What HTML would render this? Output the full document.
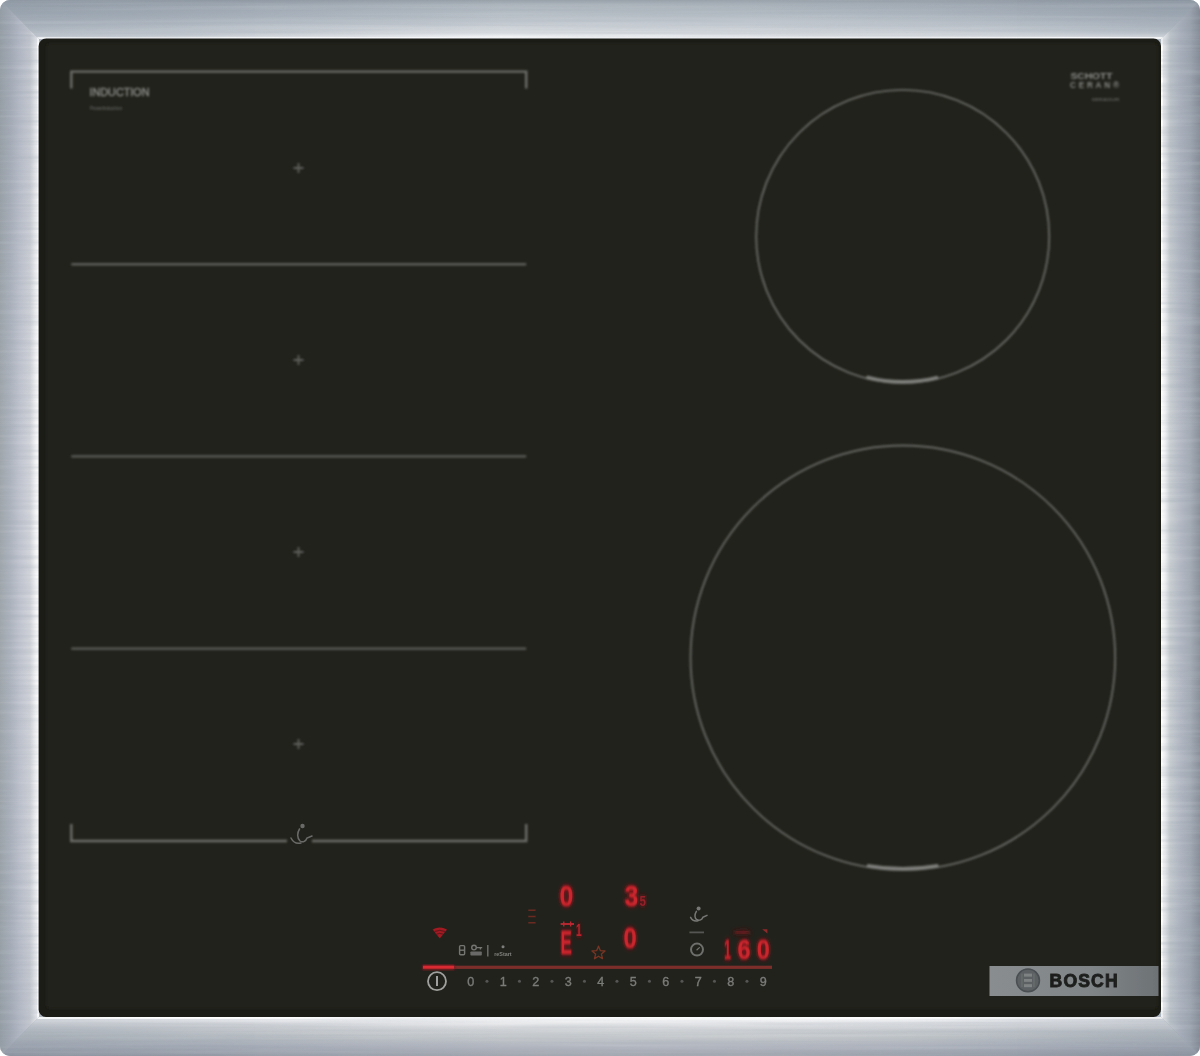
<!DOCTYPE html>
<html lang="en">
<head>
<meta charset="utf-8">
<title>Bosch induction hob</title>
<style>
html,body{margin:0;padding:0;background:#fff;}
body{width:1200px;height:1056px;overflow:hidden;position:relative;font-family:"Liberation Sans",sans-serif;}
svg{position:absolute;left:0;top:0;display:block;}
text{font-family:"Liberation Sans",sans-serif;}
</style>
</head>
<body>
<svg width="1200" height="1056" viewBox="0 0 1200 1056">
<defs>
  <linearGradient id="gTop" x1="0" y1="0" x2="0" y2="1">
    <stop offset="0" stop-color="#98a0a8"/><stop offset="0.1" stop-color="#a9b1b9"/><stop offset="0.35" stop-color="#b3bbc3"/><stop offset="0.65" stop-color="#c7cdd3"/><stop offset="0.85" stop-color="#d8dce0"/><stop offset="0.94" stop-color="#f1f2f4"/><stop offset="1" stop-color="#ffffff"/>
  </linearGradient>
  <linearGradient id="gBot" x1="0" y1="1" x2="0" y2="0">
    <stop offset="0" stop-color="#a0a5ad"/><stop offset="0.23" stop-color="#b2b6c0"/><stop offset="0.49" stop-color="#c5c9cc"/><stop offset="0.74" stop-color="#d8dadd"/><stop offset="0.9" stop-color="#f6f6f7"/><stop offset="1" stop-color="#ffffff"/>
  </linearGradient>
  <linearGradient id="gLeft" x1="0" y1="0" x2="1" y2="0">
    <stop offset="0" stop-color="#9ea5aa"/><stop offset="0.25" stop-color="#acb2bc"/><stop offset="0.5" stop-color="#c0c4cf"/><stop offset="0.77" stop-color="#d2d4da"/><stop offset="0.92" stop-color="#f4f4f6"/><stop offset="1" stop-color="#ffffff"/>
  </linearGradient>
  <linearGradient id="gRight" x1="1" y1="0" x2="0" y2="0">
    <stop offset="0" stop-color="#8a909a"/><stop offset="0.25" stop-color="#a4abb5"/><stop offset="0.5" stop-color="#b4b9c4"/><stop offset="0.77" stop-color="#c9cfd2"/><stop offset="0.9" stop-color="#f0f1f3"/><stop offset="1" stop-color="#ffffff"/>
  </linearGradient>
  <linearGradient id="gLabel" x1="0" y1="0" x2="1" y2="0">
    <stop offset="0" stop-color="#898d90"/><stop offset="0.6" stop-color="#808588"/><stop offset="1" stop-color="#6d7275"/>
  </linearGradient>
  <linearGradient id="endsH" x1="0" y1="0" x2="1" y2="0">
    <stop offset="0" stop-color="#4e6076" stop-opacity="0.26"/><stop offset="0.12" stop-color="#4e6076" stop-opacity="0.2"/><stop offset="0.3" stop-color="#4e6076" stop-opacity="0.07"/><stop offset="0.42" stop-color="#4e6076" stop-opacity="0"/><stop offset="0.62" stop-color="#4e6076" stop-opacity="0"/><stop offset="0.78" stop-color="#4e6076" stop-opacity="0.08"/><stop offset="0.9" stop-color="#4e6076" stop-opacity="0.18"/><stop offset="1" stop-color="#4e6076" stop-opacity="0.26"/>
  </linearGradient>
  <linearGradient id="endsV" x1="0" y1="0" x2="0" y2="1">
    <stop offset="0" stop-color="#4e6076" stop-opacity="0.14"/><stop offset="0.1" stop-color="#4e6076" stop-opacity="0.1"/><stop offset="0.3" stop-color="#4e6076" stop-opacity="0.03"/><stop offset="0.42" stop-color="#4e6076" stop-opacity="0"/><stop offset="0.62" stop-color="#4e6076" stop-opacity="0"/><stop offset="0.8" stop-color="#4e6076" stop-opacity="0.04"/><stop offset="0.92" stop-color="#4e6076" stop-opacity="0.1"/><stop offset="1" stop-color="#4e6076" stop-opacity="0.14"/>
  </linearGradient>
  <clipPath id="outer"><rect x="0" y="0" width="1200" height="1056" rx="10" ry="10"/></clipPath>
  <filter id="soft" x="-5%" y="-5%" width="110%" height="110%"><feGaussianBlur stdDeviation="0.6"/></filter>
  <filter id="soft2" x="-20%" y="-20%" width="140%" height="140%"><feGaussianBlur stdDeviation="0.8"/></filter>
  <filter id="brushed" x="0" y="0" width="100%" height="100%" color-interpolation-filters="sRGB">
    <feTurbulence type="fractalNoise" baseFrequency="0.003 0.2" numOctaves="3" seed="7" result="n"/>
    <feColorMatrix in="n" type="matrix" values="0 0 0 0 0.62  0 0 0 0 0.66  0 0 0 0 0.70  2.2 0 0 0 -0.78"/>
  </filter>
  <filter id="brushedL" x="0" y="0" width="100%" height="100%" color-interpolation-filters="sRGB">
    <feTurbulence type="fractalNoise" baseFrequency="0.003 0.2" numOctaves="3" seed="11" result="n"/>
    <feColorMatrix in="n" type="matrix" values="0 0 0 0 1  0 0 0 0 1  0 0 0 0 1  2.2 0 0 0 -0.98"/>
  </filter>
  <filter id="ringblur" x="-5%" y="-5%" width="110%" height="110%"><feGaussianBlur stdDeviation="0.85"/></filter>
  <filter id="glow" x="-50%" y="-50%" width="200%" height="200%"><feGaussianBlur stdDeviation="2"/></filter>
</defs>

<rect width="1200" height="1056" fill="#ffffff"/>
<g clip-path="url(#outer)" id="frame">
  <rect x="0" y="0" width="1200" height="1056" fill="#adb4bd"/>
  <!-- four mitred frame sides -->
  <polygon points="0,0 1200,0 1161,39 39,39" fill="url(#gTop)"/>
  <polygon points="0,1056 1200,1056 1161,1017 39,1017" fill="url(#gBot)"/>
  <polygon points="0,0 39,39 39,1017 0,1056" fill="url(#gLeft)"/>
  <polygon points="1200,0 1161,39 1161,1017 1200,1056" fill="url(#gRight)"/>
  <polygon points="0,0 1200,0 1163,37 37,37" fill="url(#endsH)"/>
  <polygon points="0,1056 1200,1056 1163,1019 37,1019" fill="url(#endsH)"/>
  <polygon points="0,0 37,37 37,1019 0,1056" fill="url(#endsV)"/>
  <polygon points="1200,0 1163,37 1163,1019 1200,1056" fill="url(#endsV)"/>
  <rect x="0" y="0" width="1200" height="1056" filter="url(#brushed)" opacity="0.25"/>
  <rect x="0" y="0" width="1200" height="1056" filter="url(#brushedL)" opacity="0.10"/>
</g>

<!-- glass -->
<g id="glass">
  <rect x="38.6" y="38.6" width="1122.4" height="978.4" rx="7.5" ry="7.5" fill="#1a1a17" filter="url(#soft)"/>
  <rect x="46.5" y="43.5" width="1111" height="965" rx="4" ry="4" fill="#22231e" filter="url(#soft2)"/>
</g>

<!-- SECTION:ZONES -->
<g id="zones" fill="none" stroke="#5b5c58" stroke-width="2.4" filter="url(#soft2)">
  <path d="M71.3 88.5 V71.6 H526.2 V88.5" stroke="#6c6d69"/>
  <path d="M71.3 264.2 H526.2"/>
  <path d="M71.3 456.4 H526.2"/>
  <path d="M71.3 648.6 H526.2"/>
  <path d="M71.3 824 V841 H287" stroke="#6c6d69"/>
  <path d="M312 841 H526.2 V824" stroke="#6c6d69"/>
</g>
<g id="crosses" stroke="#5e5f5c" stroke-width="1.8" filter="url(#soft2)">
  <path d="M293.5 168 H303.5 M298.5 163 V173"/>
  <path d="M293.5 360 H303.5 M298.5 355 V365"/>
  <path d="M293.5 552 H303.5 M298.5 547 V557"/>
  <path d="M293.5 744 H303.5 M298.5 739 V749"/>
</g>
<g id="flexicon" fill="none" stroke="#6a6b68" stroke-width="1.5" stroke-linecap="round" filter="url(#soft)">
  <circle cx="302.5" cy="826" r="2.2" fill="#6a6b68" stroke="none"/>
  <path d="M299.5 829 C297 833 297 838 300 841 C303 843 306 841 307 838 L312 836"/>
  <path d="M291 838 C293 842 297 844 301 843"/>
</g>
<!-- SECTION:CIRCLES -->
<g id="rings" fill="none" filter="url(#ringblur)">
  <circle cx="902.7" cy="236.4" r="146.5" stroke="#656662" stroke-width="1.9"/>
  <path d="M866.5 377.2 A145.4 145.4 0 0 0 938 377.4" stroke="#7f807d" stroke-width="3.6"/>
  <circle cx="902.85" cy="657.8" r="212.3" stroke="#656662" stroke-width="1.9"/>
  <path d="M867 865.7 A211 211 0 0 0 938.4 865.8" stroke="#7f807d" stroke-width="3.6"/>
</g>
<!-- SECTION:TEXT -->
<g id="labels" filter="url(#soft2)">
  <text x="89.5" y="96" font-size="10.5" fill="#8b8c89" stroke="#8b8c89" stroke-width="0.35" textLength="60" lengthAdjust="spacingAndGlyphs">INDUCTION</text>
  <text x="90" y="109.5" font-size="4.6" font-weight="bold" fill="#5d5e5b" textLength="32" lengthAdjust="spacingAndGlyphs">PowerInduction</text>
  <text x="1070.5" y="79.2" font-size="9.6" font-weight="bold" fill="#8b8c89" textLength="42" lengthAdjust="spacingAndGlyphs">SCHOTT</text>
  <text x="1070" y="88" font-size="8.2" font-weight="bold" fill="#858683" textLength="49" lengthAdjust="spacing">CERAN®</text>
  <text x="1092" y="101.2" font-size="4.4" font-weight="bold" fill="#5d5e5b" textLength="27.5" lengthAdjust="spacingAndGlyphs">MIRADUR</text>
</g>
<!-- SECTION:PANEL -->
<g id="panel">
<g transform="translate(559.6 906) scale(0.86 1)" font-size="29" font-weight="bold" text-anchor="start" opacity="1"><text x="0" y="0" fill="#8e141c" stroke="#8e141c" stroke-width="2.2" filter="url(#glow)">0</text><text x="0" y="0" fill="#cb252d" filter="url(#soft2)">0</text></g>
<g transform="translate(624.4 906) scale(0.86 1)" font-size="29" font-weight="bold" text-anchor="start" opacity="1"><text x="0" y="0" fill="#8e141c" stroke="#8e141c" stroke-width="2.2" filter="url(#glow)">3</text><text x="0" y="0" fill="#cb252d" filter="url(#soft2)">3</text></g>
<g transform="translate(639.5 906) scale(0.8 1)" font-size="14.5" font-weight="bold" text-anchor="start" opacity="1"><text x="0" y="0" fill="#5a1218" stroke="#5a1218" stroke-width="2.2" filter="url(#glow)">5</text><text x="0" y="0" fill="#94202a" filter="url(#soft)">5</text></g>
<g transform="translate(560.6 953.6) scale(0.5 1)" font-size="34" font-weight="bold" text-anchor="start" opacity="1"><text x="0" y="0" fill="#8e141c" stroke="#8e141c" stroke-width="2.2" filter="url(#glow)">E</text><text x="0" y="0" fill="#cb252d" filter="url(#soft2)">E</text></g>
<g transform="translate(576 935.6) scale(0.6 1)" font-size="17" font-weight="bold" text-anchor="start" opacity="1"><text x="0" y="0" fill="#5a1218" stroke="#5a1218" stroke-width="2.2" filter="url(#glow)">1</text><text x="0" y="0" fill="#b8242c" filter="url(#soft)">1</text></g>
<g transform="translate(623.6 948) scale(0.82 1)" font-size="29" font-weight="bold" text-anchor="start" opacity="1"><text x="0" y="0" fill="#8e141c" stroke="#8e141c" stroke-width="2.2" filter="url(#glow)">0</text><text x="0" y="0" fill="#cb252d" filter="url(#soft2)">0</text></g>
<g transform="translate(724.2 958.6) scale(0.42 1)" font-size="28" font-weight="bold" text-anchor="start" opacity="1"><text x="0" y="0" fill="#8e141c" stroke="#8e141c" stroke-width="2.2" filter="url(#glow)">1</text><text x="0" y="0" fill="#c0242c" filter="url(#soft2)">1</text></g>
<g transform="translate(737.4 958.6) scale(0.84 1)" font-size="28" font-weight="bold" text-anchor="start" opacity="1"><text x="0" y="0" fill="#8e141c" stroke="#8e141c" stroke-width="2.2" filter="url(#glow)">6</text><text x="0" y="0" fill="#cb252d" filter="url(#soft2)">6</text></g>
<g transform="translate(756.8 958.6) scale(0.84 1)" font-size="28" font-weight="bold" text-anchor="start" opacity="1"><text x="0" y="0" fill="#8e141c" stroke="#8e141c" stroke-width="2.2" filter="url(#glow)">0</text><text x="0" y="0" fill="#cb252d" filter="url(#soft2)">0</text></g>
<g transform="translate(735.2 933.6) scale(1.45 1)" font-size="6" font-weight="normal" text-anchor="start" opacity="1"><text x="0" y="0" fill="#4a1216" stroke="#4a1216" stroke-width="2.2" filter="url(#glow)">min</text><text x="0" y="0" fill="#8a2a2a" filter="url(#soft)">min</text></g>
<g fill="none" stroke="#6a2a22" stroke-width="1.6" filter="url(#soft)">
  <path d="M528.3 910.2 H535.6 M528.3 916.5 H535.6 M528.3 922.8 H535.6"/>
</g>
<g fill="none" stroke="#c02830" stroke-width="1.8" filter="url(#soft)">
  <path d="M560.6 924 H574"/>
  <path d="M563.8 921.4 V926.6 M570.6 921.4 V926.6" stroke-width="1.3"/>
</g>
<path d="M598.5 946.2 L600.3 950.6 L605 951 L601.4 954.1 L602.5 958.7 L598.5 956.2 L594.5 958.7 L595.6 954.1 L592 951 L596.7 950.6 Z" fill="none" stroke="#7a3424" stroke-width="1.3" stroke-linejoin="round" filter="url(#soft)"/>
<path d="M762.2 929.2 H767.4 V933.6 Z" fill="#8e2a2a" filter="url(#soft)"/>
<g filter="url(#soft)">
  <path d="M432.6 929.4 Q439.8 925.8 447 929.4 L439.8 938.6 Z" fill="#a01a22"/>
  <path d="M434.4 931.6 Q439.8 929 445.2 931.6 M436.4 934.2 Q439.8 932.6 443.2 934.2" fill="none" stroke="#5a1418" stroke-width="0.9"/>
</g>
<g filter="url(#soft)">
  <rect x="423" y="965.7" width="349" height="3.2" fill="#7c2d2a" filter="url(#soft)"/>
  <rect x="422.5" y="964.6" width="32" height="5.4" fill="#8a1a20" filter="url(#soft2)"/>
  <rect x="423" y="965.8" width="31" height="2.8" fill="#d82a32"/>
</g>
<g fill="none" stroke="#a0a19e" stroke-width="1.8" filter="url(#soft)">
  <circle cx="437" cy="981.2" r="9"/>
  <path d="M437 976 V986" stroke-width="2"/>
</g>
<g font-size="12.6" fill="#7a7b78" stroke="#7a7b78" stroke-width="0.35" text-anchor="middle" filter="url(#soft)">
<text x="470.7" y="985.7">0</text>
<text x="503.2" y="985.7">1</text>
<text x="535.7" y="985.7">2</text>
<text x="568.2" y="985.7">3</text>
<text x="600.7" y="985.7">4</text>
<text x="633.2" y="985.7">5</text>
<text x="665.7" y="985.7">6</text>
<text x="698.2" y="985.7">7</text>
<text x="730.7" y="985.7">8</text>
<text x="763.2" y="985.7">9</text>
</g>
<g fill="#555653" filter="url(#soft)">
<circle cx="486.95" cy="981.2" r="1.5"/>
<circle cx="519.45" cy="981.2" r="1.5"/>
<circle cx="551.95" cy="981.2" r="1.5"/>
<circle cx="584.45" cy="981.2" r="1.5"/>
<circle cx="616.95" cy="981.2" r="1.5"/>
<circle cx="649.45" cy="981.2" r="1.5"/>
<circle cx="681.95" cy="981.2" r="1.5"/>
<circle cx="714.45" cy="981.2" r="1.5"/>
<circle cx="746.95" cy="981.2" r="1.5"/>
</g>
<g filter="url(#soft)" fill="none" stroke="#747572" stroke-width="1.4">
  <rect x="459.6" y="945.6" width="5" height="9.2" rx="1"/>
  <path d="M459.6 950.2 H464.6"/>
  <circle cx="474" cy="947.6" r="2.3"/>
  <path d="M476.3 947.6 H482.2 M480.4 947.6 V949.6"/>
  <rect x="470.4" y="951.4" width="11.4" height="4.2" rx="0.8" fill="#6a6b68" stroke="none"/>
  <path d="M487.8 945 V956.4" stroke="#6a6b68" stroke-width="1.5"/>
  <circle cx="503" cy="946.8" r="1.5" fill="#7d7e7b" stroke="none"/>
</g>
<text x="494.2" y="956.2" font-size="5.6" font-weight="bold" fill="#80817e" textLength="17.4" lengthAdjust="spacingAndGlyphs" filter="url(#soft)">reStart</text>
<g filter="url(#soft)" fill="none" stroke="#777875" stroke-width="1.5" stroke-linecap="round">
  <circle cx="698.6" cy="908.4" r="2" fill="#777875" stroke="none"/>
  <path d="M696.4 911.4 C694.4 914.6 694.4 918.2 697 919.8 C699.6 921 702 919.6 702.8 917.4 L707 915.4"/>
  <path d="M690.6 917.4 C692 920.2 695 921.4 698 920.8"/>
  <path d="M689.4 932.4 H704" stroke="#555653" stroke-width="1.8" stroke-linecap="butt"/>
  <circle cx="697" cy="949.6" r="6" stroke="#6e6f6c" stroke-width="2"/>
  <path d="M697 949.8 L699.4 947.6" stroke="#737471" stroke-width="1.2"/>
</g>
</g>
<!-- SECTION:LABEL -->
<g id="boschlabel" filter="url(#soft)">
  <rect x="989.5" y="966" width="169" height="30" fill="url(#gLabel)"/>
  <circle cx="1028" cy="980.4" r="11.4" fill="#5b6063" stroke="#4a4f52" stroke-width="1.6"/>
  <path d="M1022 973.6 V987.2 M1034 973.6 V987.2" stroke="#6c6f6f" stroke-width="1.2" fill="none"/>
  <rect x="1024" y="973.6" width="8" height="3" fill="#7f8282"/>
  <rect x="1024" y="979" width="8" height="2.8" fill="#7f8282"/>
  <rect x="1024" y="984.2" width="8" height="3" fill="#7f8282"/>
  <text x="1049.6" y="986.8" font-size="17.6" font-weight="bold" fill="#1f201e" stroke="#1f201e" stroke-width="0.9" textLength="68" lengthAdjust="spacing">BOSCH</text>
</g>
</svg>
</body>
</html>
